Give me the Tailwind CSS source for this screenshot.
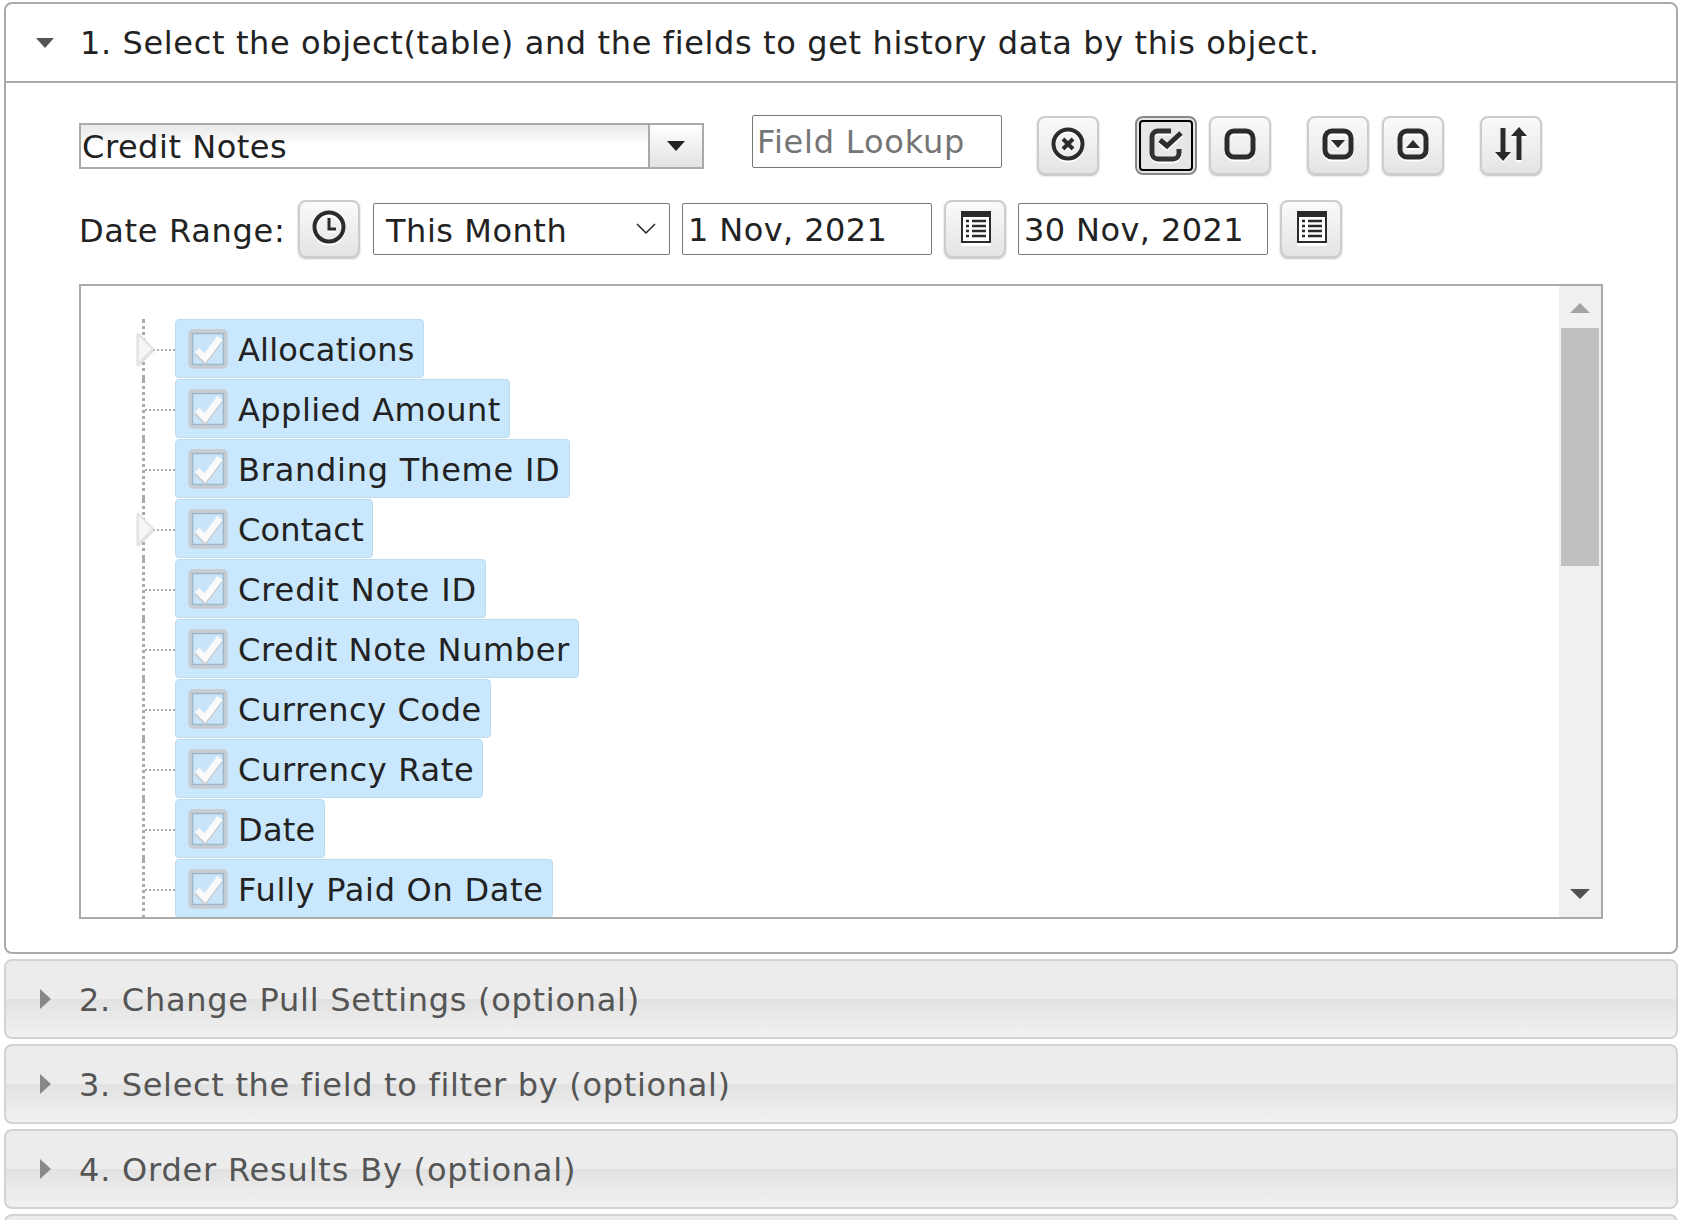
<!DOCTYPE html>
<html>
<head>
<meta charset="utf-8">
<script src="https://cdn.jsdelivr.net/npm/@tailwindcss/browser@4"></script>
</head>
<body class="bg-white font-['DejaVu_Sans',sans-serif] text-[#222] text-[32px] overflow-hidden h-[1220px]">
<div class="pl-[4px] pr-[8px] pt-[2px] flex flex-col gap-[5px] h-[1220px] overflow-hidden">

  <!-- Panel 1 -->
  <section class="h-[952px] shrink-0 border-2 border-[#aaa] rounded-lg bg-white flex flex-col">
    <header class="h-[79px] shrink-0 border-b-2 border-[#aaa] flex items-center pl-[29px]">
      <svg class="w-[20px] h-[12px] mr-[25px]" viewBox="0 0 20 12"><path d="M1 1h18l-9 10z" fill="#555"/></svg>
      <span class="leading-none pt-[1px] tracking-[0.63px]">1. Select the object(table) and the fields to get history data by this object.</span>
    </header>
    <div class="pl-[73px] pr-[73px]">
      <!-- row 1 -->
      <div class="flex h-[93px] pt-[32px]">
        <div class="w-[625px] h-[46px] mt-[8px] border-2 border-[#aaa] bg-gradient-to-b from-[#e8e8e8] via-white to-white flex">
          <div class="flex-1 leading-[44px] pl-[1px] tracking-[0.54px]">Credit Notes</div>
          <div class="w-[54px] border-l-2 border-[#aaa] bg-gradient-to-b from-white to-[#e2e2e2] flex items-center justify-center">
            <svg class="w-[18px] h-[10px]" viewBox="0 0 18 10"><path d="M0 0h18l-9 10z" fill="#222"/></svg>
          </div>
        </div>
        <div class="ml-[48px] w-[250px] h-[53px] border border-[#777] rounded-[2px] pl-[4px] leading-[53px] text-[#757575] tracking-[0.8px]">Field Lookup</div>
        <button class="ml-[35px] w-[62px] h-[59px] mt-[1px] border-2 border-[#ccc] rounded-lg bg-gradient-to-b from-[#fafafa] to-[#e4e4e4] shadow-[0_1px_2px_#bbb] flex items-center justify-center">
          <svg class="w-[34px] h-[34px] mb-[4px] drop-shadow-[0_2px_0_#fff]" viewBox="0 0 34 34"><circle cx="17" cy="17" r="14.5" fill="none" stroke="#2b2b2b" stroke-width="4"/><path d="M12 12l10 10M22 12l-10 10" stroke="#2b2b2b" stroke-width="4"/></svg>
        </button>
        <button class="ml-[36px] w-[62px] h-[59px] mt-[1px] border-2 border-[#888] rounded-lg bg-[#e6e6e6] p-[2px]">
          <span class="w-full h-full border-2 border-black rounded-[4px] flex items-center justify-center">
            <svg class="w-[34px] h-[34px] mb-[2px] drop-shadow-[0_2px_0_#fff]" viewBox="0 0 34 34"><path d="M30 21v4a6 6 0 0 1-6 6H9a6 6 0 0 1-6-6V9a6 6 0 0 1 6-6h13" fill="none" stroke="#333" stroke-width="5"/><path d="M11 12l7 6L32 5" fill="none" stroke="#2b2b2b" stroke-width="5"/></svg>
          </span>
        </button>
        <button class="ml-[12px] w-[62px] h-[59px] mt-[1px] border-2 border-[#ccc] rounded-lg bg-gradient-to-b from-[#fafafa] to-[#e4e4e4] shadow-[0_1px_2px_#bbb] flex items-center justify-center">
          <svg class="w-[32px] h-[32px] mb-[4px] drop-shadow-[0_2px_0_#fff]" viewBox="0 0 32 32"><rect x="3" y="3" width="26" height="26" rx="7" fill="none" stroke="#2b2b2b" stroke-width="5"/></svg>
        </button>
        <button class="ml-[36px] w-[62px] h-[59px] mt-[1px] border-2 border-[#ccc] rounded-lg bg-gradient-to-b from-[#fafafa] to-[#e4e4e4] shadow-[0_1px_2px_#bbb] flex items-center justify-center">
          <svg class="w-[32px] h-[32px] mb-[4px] drop-shadow-[0_2px_0_#fff]" viewBox="0 0 32 32"><rect x="3" y="3" width="26" height="26" rx="7" fill="none" stroke="#2b2b2b" stroke-width="5"/><path d="M9 12h14l-7 8z" fill="#2b2b2b"/></svg>
        </button>
        <button class="ml-[13px] w-[62px] h-[59px] mt-[1px] border-2 border-[#ccc] rounded-lg bg-gradient-to-b from-[#fafafa] to-[#e4e4e4] shadow-[0_1px_2px_#bbb] flex items-center justify-center">
          <svg class="w-[32px] h-[32px] mb-[4px] drop-shadow-[0_2px_0_#fff]" viewBox="0 0 32 32"><rect x="3" y="3" width="26" height="26" rx="7" fill="none" stroke="#2b2b2b" stroke-width="5"/><path d="M9 20h14l-7-8z" fill="#2b2b2b"/></svg>
        </button>
        <button class="ml-[36px] w-[62px] h-[59px] mt-[1px] border-2 border-[#ccc] rounded-lg bg-gradient-to-b from-[#fafafa] to-[#e4e4e4] shadow-[0_1px_2px_#bbb] flex items-center justify-center">
          <svg class="w-[32px] h-[34px] mb-[4px] drop-shadow-[0_2px_0_#fff]" viewBox="0 0 32 34"><path d="M8 1v25M24 8v25" stroke="#2b2b2b" stroke-width="5"/><path d="M0 25h16l-8 9zM16 9h16l-8-9z" fill="#2b2b2b"/></svg>
        </button>
      </div>
      <!-- row 2 -->
      <div class="flex h-[108px] pt-[24px] items-start">
        <span class="w-[219px] h-[58px] leading-[62px] shrink-0 tracking-[0.68px]">Date Range:</span>
        <button class="w-[62px] h-[58px] border-2 border-[#ccc] rounded-lg bg-gradient-to-b from-[#fafafa] to-[#e4e4e4] shadow-[0_1px_2px_#bbb] flex items-center justify-center">
          <svg class="w-[34px] h-[34px] mb-[4px] drop-shadow-[0_2px_0_#fff]" viewBox="0 0 34 34"><circle cx="17" cy="17" r="14.5" fill="none" stroke="#2b2b2b" stroke-width="4"/><path d="M17 8v11h7" fill="none" stroke="#2b2b2b" stroke-width="3"/></svg>
        </button>
        <div class="ml-[13px] mt-[3px] w-[297px] h-[52px] border border-[#777] rounded-[2px] flex items-center justify-between pl-[12px] pr-[13px]">
          <span class="tracking-[0.54px] pt-[3px]">This Month</span>
          <svg class="w-[20px] h-[12px]" viewBox="0 0 20 12"><path d="M1 1l9 9 9-9" fill="none" stroke="#222" stroke-width="1.5"/></svg>
        </div>
        <div class="ml-[12px] mt-[3px] w-[250px] h-[52px] border border-[#777] rounded-[2px] pl-[5px] leading-[53px] tracking-[0.4px]">1 Nov, 2021</div>
        <button class="ml-[12px] w-[62px] h-[58px] border-2 border-[#ccc] rounded-lg bg-gradient-to-b from-[#fafafa] to-[#e4e4e4] shadow-[0_1px_2px_#bbb] flex items-center justify-center">
          <svg class="w-[30px] h-[32px] mb-[4px] ml-[2px] drop-shadow-[0_3px_0_#fff]" viewBox="0 0 30 32"><rect x="0" y="0" width="30" height="32" fill="#2b2b2b"/><rect x="2" y="6" width="26" height="24" fill="#fff"/><path d="M5 10h3M11 10h14M5 15h3M11 15h14M5 20h3M11 20h14M5 25h3M11 25h14" stroke="#2b2b2b" stroke-width="2.5"/></svg>
        </button>
        <div class="ml-[12px] mt-[3px] w-[250px] h-[52px] border border-[#777] rounded-[2px] pl-[5px] leading-[53px] tracking-[0.4px]">30 Nov, 2021</div>
        <button class="ml-[12px] w-[62px] h-[58px] border-2 border-[#ccc] rounded-lg bg-gradient-to-b from-[#fafafa] to-[#e4e4e4] shadow-[0_1px_2px_#bbb] flex items-center justify-center">
          <svg class="w-[30px] h-[32px] mb-[4px] ml-[2px] drop-shadow-[0_3px_0_#fff]" viewBox="0 0 30 32"><rect x="0" y="0" width="30" height="32" fill="#2b2b2b"/><rect x="2" y="6" width="26" height="24" fill="#fff"/><path d="M5 10h3M11 10h14M5 15h3M11 15h14M5 20h3M11 20h14M5 25h3M11 25h14" stroke="#2b2b2b" stroke-width="2.5"/></svg>
        </button>
      </div>
      <!-- tree -->
      <div class="w-[1524px] h-[635px] border-2 border-[#aaa] flex overflow-hidden">
        <div class="flex-1 overflow-hidden pt-[33px] pl-[61px] flex flex-col">

          <div class="h-[60px] shrink-0 flex"><div class="w-[33px] shrink-0 relative border-l-[3px] border-dotted border-[#aaa]"><div class="absolute left-0 right-0 top-[30px] border-t-2 border-dotted border-[#aaa]"></div><svg class="absolute left-[-9px] top-[14px] w-[20px] h-[32px] drop-shadow-[0_1px_1px_#ccc]" viewBox="0 0 20 32"><path d="M2 1l15 15L2 31z" fill="#f6f6f6" stroke="#e4e4e4" stroke-width="2"/></svg></div><div class="h-[59px] flex items-center bg-[#c9e7fd] border border-[#bcdcf2] rounded-[4px] pl-[12px] pr-[8px] tracking-[0.2px]"><svg class="w-[40px] h-[40px] mr-[10px]" viewBox="0 0 40 40"><rect x="2" y="2" width="36" height="36" rx="3" fill="#d8e6f2" stroke="#c6ccd2" stroke-width="3.5"/><rect x="4.5" y="4.5" width="31" height="31" fill="#c9e4f8" stroke="#9fb4c4" stroke-width="1.5"/><path d="M9 21l8 8 15-20" fill="none" stroke="#c5cbd0" stroke-width="7" transform="translate(0 2)"/><path d="M9 21l8 8 15-20" fill="none" stroke="#fafafa" stroke-width="6.5"/></svg><span class="pt-[3px]">Allocations</span></div></div>

          <div class="h-[60px] shrink-0 flex"><div class="w-[33px] shrink-0 relative border-l-[3px] border-dotted border-[#aaa]"><div class="absolute left-0 right-0 top-[30px] border-t-2 border-dotted border-[#aaa]"></div></div><div class="h-[59px] flex items-center bg-[#c9e7fd] border border-[#bcdcf2] rounded-[4px] pl-[12px] pr-[8px] tracking-[0.46px]"><svg class="w-[40px] h-[40px] mr-[10px]" viewBox="0 0 40 40"><rect x="2" y="2" width="36" height="36" rx="3" fill="#d8e6f2" stroke="#c6ccd2" stroke-width="3.5"/><rect x="4.5" y="4.5" width="31" height="31" fill="#c9e4f8" stroke="#9fb4c4" stroke-width="1.5"/><path d="M9 21l8 8 15-20" fill="none" stroke="#c5cbd0" stroke-width="7" transform="translate(0 2)"/><path d="M9 21l8 8 15-20" fill="none" stroke="#fafafa" stroke-width="6.5"/></svg><span class="pt-[3px]">Applied Amount</span></div></div>

          <div class="h-[60px] shrink-0 flex"><div class="w-[33px] shrink-0 relative border-l-[3px] border-dotted border-[#aaa]"><div class="absolute left-0 right-0 top-[30px] border-t-2 border-dotted border-[#aaa]"></div></div><div class="h-[59px] flex items-center bg-[#c9e7fd] border border-[#bcdcf2] rounded-[4px] pl-[12px] pr-[8px] tracking-[0.76px]"><svg class="w-[40px] h-[40px] mr-[10px]" viewBox="0 0 40 40"><rect x="2" y="2" width="36" height="36" rx="3" fill="#d8e6f2" stroke="#c6ccd2" stroke-width="3.5"/><rect x="4.5" y="4.5" width="31" height="31" fill="#c9e4f8" stroke="#9fb4c4" stroke-width="1.5"/><path d="M9 21l8 8 15-20" fill="none" stroke="#c5cbd0" stroke-width="7" transform="translate(0 2)"/><path d="M9 21l8 8 15-20" fill="none" stroke="#fafafa" stroke-width="6.5"/></svg><span class="pt-[3px]">Branding Theme ID</span></div></div>

          <div class="h-[60px] shrink-0 flex"><div class="w-[33px] shrink-0 relative border-l-[3px] border-dotted border-[#aaa]"><div class="absolute left-0 right-0 top-[30px] border-t-2 border-dotted border-[#aaa]"></div><svg class="absolute left-[-9px] top-[14px] w-[20px] h-[32px] drop-shadow-[0_1px_1px_#ccc]" viewBox="0 0 20 32"><path d="M2 1l15 15L2 31z" fill="#f6f6f6" stroke="#e4e4e4" stroke-width="2"/></svg></div><div class="h-[59px] flex items-center bg-[#c9e7fd] border border-[#bcdcf2] rounded-[4px] pl-[12px] pr-[8px] tracking-[0.2px]"><svg class="w-[40px] h-[40px] mr-[10px]" viewBox="0 0 40 40"><rect x="2" y="2" width="36" height="36" rx="3" fill="#d8e6f2" stroke="#c6ccd2" stroke-width="3.5"/><rect x="4.5" y="4.5" width="31" height="31" fill="#c9e4f8" stroke="#9fb4c4" stroke-width="1.5"/><path d="M9 21l8 8 15-20" fill="none" stroke="#c5cbd0" stroke-width="7" transform="translate(0 2)"/><path d="M9 21l8 8 15-20" fill="none" stroke="#fafafa" stroke-width="6.5"/></svg><span class="pt-[3px]">Contact</span></div></div>

          <div class="h-[60px] shrink-0 flex"><div class="w-[33px] shrink-0 relative border-l-[3px] border-dotted border-[#aaa]"><div class="absolute left-0 right-0 top-[30px] border-t-2 border-dotted border-[#aaa]"></div></div><div class="h-[59px] flex items-center bg-[#c9e7fd] border border-[#bcdcf2] rounded-[4px] pl-[12px] pr-[8px] tracking-[0.9px]"><svg class="w-[40px] h-[40px] mr-[10px]" viewBox="0 0 40 40"><rect x="2" y="2" width="36" height="36" rx="3" fill="#d8e6f2" stroke="#c6ccd2" stroke-width="3.5"/><rect x="4.5" y="4.5" width="31" height="31" fill="#c9e4f8" stroke="#9fb4c4" stroke-width="1.5"/><path d="M9 21l8 8 15-20" fill="none" stroke="#c5cbd0" stroke-width="7" transform="translate(0 2)"/><path d="M9 21l8 8 15-20" fill="none" stroke="#fafafa" stroke-width="6.5"/></svg><span class="pt-[3px]">Credit Note ID</span></div></div>

          <div class="h-[60px] shrink-0 flex"><div class="w-[33px] shrink-0 relative border-l-[3px] border-dotted border-[#aaa]"><div class="absolute left-0 right-0 top-[30px] border-t-2 border-dotted border-[#aaa]"></div></div><div class="h-[59px] flex items-center bg-[#c9e7fd] border border-[#bcdcf2] rounded-[4px] pl-[12px] pr-[8px] tracking-[0.6px]"><svg class="w-[40px] h-[40px] mr-[10px]" viewBox="0 0 40 40"><rect x="2" y="2" width="36" height="36" rx="3" fill="#d8e6f2" stroke="#c6ccd2" stroke-width="3.5"/><rect x="4.5" y="4.5" width="31" height="31" fill="#c9e4f8" stroke="#9fb4c4" stroke-width="1.5"/><path d="M9 21l8 8 15-20" fill="none" stroke="#c5cbd0" stroke-width="7" transform="translate(0 2)"/><path d="M9 21l8 8 15-20" fill="none" stroke="#fafafa" stroke-width="6.5"/></svg><span class="pt-[3px]">Credit Note Number</span></div></div>

          <div class="h-[60px] shrink-0 flex"><div class="w-[33px] shrink-0 relative border-l-[3px] border-dotted border-[#aaa]"><div class="absolute left-0 right-0 top-[30px] border-t-2 border-dotted border-[#aaa]"></div></div><div class="h-[59px] flex items-center bg-[#c9e7fd] border border-[#bcdcf2] rounded-[4px] pl-[12px] pr-[8px] tracking-[0.58px]"><svg class="w-[40px] h-[40px] mr-[10px]" viewBox="0 0 40 40"><rect x="2" y="2" width="36" height="36" rx="3" fill="#d8e6f2" stroke="#c6ccd2" stroke-width="3.5"/><rect x="4.5" y="4.5" width="31" height="31" fill="#c9e4f8" stroke="#9fb4c4" stroke-width="1.5"/><path d="M9 21l8 8 15-20" fill="none" stroke="#c5cbd0" stroke-width="7" transform="translate(0 2)"/><path d="M9 21l8 8 15-20" fill="none" stroke="#fafafa" stroke-width="6.5"/></svg><span class="pt-[3px]">Currency Code</span></div></div>

          <div class="h-[60px] shrink-0 flex"><div class="w-[33px] shrink-0 relative border-l-[3px] border-dotted border-[#aaa]"><div class="absolute left-0 right-0 top-[30px] border-t-2 border-dotted border-[#aaa]"></div></div><div class="h-[59px] flex items-center bg-[#c9e7fd] border border-[#bcdcf2] rounded-[4px] pl-[12px] pr-[8px] tracking-[0.66px]"><svg class="w-[40px] h-[40px] mr-[10px]" viewBox="0 0 40 40"><rect x="2" y="2" width="36" height="36" rx="3" fill="#d8e6f2" stroke="#c6ccd2" stroke-width="3.5"/><rect x="4.5" y="4.5" width="31" height="31" fill="#c9e4f8" stroke="#9fb4c4" stroke-width="1.5"/><path d="M9 21l8 8 15-20" fill="none" stroke="#c5cbd0" stroke-width="7" transform="translate(0 2)"/><path d="M9 21l8 8 15-20" fill="none" stroke="#fafafa" stroke-width="6.5"/></svg><span class="pt-[3px]">Currency Rate</span></div></div>

          <div class="h-[60px] shrink-0 flex"><div class="w-[33px] shrink-0 relative border-l-[3px] border-dotted border-[#aaa]"><div class="absolute left-0 right-0 top-[30px] border-t-2 border-dotted border-[#aaa]"></div></div><div class="h-[59px] flex items-center bg-[#c9e7fd] border border-[#bcdcf2] rounded-[4px] pl-[12px] pr-[8px] tracking-[0.27px]"><svg class="w-[40px] h-[40px] mr-[10px]" viewBox="0 0 40 40"><rect x="2" y="2" width="36" height="36" rx="3" fill="#d8e6f2" stroke="#c6ccd2" stroke-width="3.5"/><rect x="4.5" y="4.5" width="31" height="31" fill="#c9e4f8" stroke="#9fb4c4" stroke-width="1.5"/><path d="M9 21l8 8 15-20" fill="none" stroke="#c5cbd0" stroke-width="7" transform="translate(0 2)"/><path d="M9 21l8 8 15-20" fill="none" stroke="#fafafa" stroke-width="6.5"/></svg><span class="pt-[3px]">Date</span></div></div>

          <div class="h-[60px] shrink-0 flex"><div class="w-[33px] shrink-0 relative border-l-[3px] border-dotted border-[#aaa]"><div class="absolute left-0 right-0 top-[30px] border-t-2 border-dotted border-[#aaa]"></div></div><div class="h-[59px] flex items-center bg-[#c9e7fd] border border-[#bcdcf2] rounded-[4px] pl-[12px] pr-[8px] tracking-[0.72px]"><svg class="w-[40px] h-[40px] mr-[10px]" viewBox="0 0 40 40"><rect x="2" y="2" width="36" height="36" rx="3" fill="#d8e6f2" stroke="#c6ccd2" stroke-width="3.5"/><rect x="4.5" y="4.5" width="31" height="31" fill="#c9e4f8" stroke="#9fb4c4" stroke-width="1.5"/><path d="M9 21l8 8 15-20" fill="none" stroke="#c5cbd0" stroke-width="7" transform="translate(0 2)"/><path d="M9 21l8 8 15-20" fill="none" stroke="#fafafa" stroke-width="6.5"/></svg><span class="pt-[3px]">Fully Paid On Date</span></div></div>

        </div>
        <!-- scrollbar -->
        <div class="w-[42px] shrink-0 bg-[#f0f0f0] flex flex-col items-center">
          <div class="h-[42px] shrink-0 pt-[2px] flex items-center justify-center"><svg class="w-[20px] h-[10px]" viewBox="0 0 20 10"><path d="M0 10h20L10 0z" fill="#a3a3a3"/></svg></div>
          <div class="w-[38px] h-[238px] shrink-0 bg-[#c0c0c0]"></div>
          <div class="flex-1"></div>
          <div class="h-[46px] shrink-0 flex items-center justify-center"><svg class="w-[20px] h-[10px]" viewBox="0 0 20 10"><path d="M0 0h20L10 10z" fill="#505050"/></svg></div>
        </div>
      </div>
    </div>
  </section>

  <!-- Collapsed panels -->
  <section class="h-[80px] shrink-0 border-2 border-[#d3d3d3] rounded-lg bg-[linear-gradient(#ececec_50%,#e2e2e2_50%,#f1f1f1)] flex items-center pl-[34px] text-[#555]">
    <svg class="w-[11px] h-[20px] mr-[28px]" viewBox="0 0 11 20"><path d="M0 0l11 10L0 20z" fill="#888"/></svg>
    <span class="pt-[2px] tracking-[0.72px]">2. Change Pull Settings (optional)</span>
  </section>
  <section class="h-[80px] shrink-0 border-2 border-[#d3d3d3] rounded-lg bg-[linear-gradient(#ececec_50%,#e2e2e2_50%,#f1f1f1)] flex items-center pl-[34px] text-[#555]">
    <svg class="w-[11px] h-[20px] mr-[28px]" viewBox="0 0 11 20"><path d="M0 0l11 10L0 20z" fill="#888"/></svg>
    <span class="pt-[2px] tracking-[0.68px]">3. Select the field to filter by (optional)</span>
  </section>
  <section class="h-[80px] shrink-0 border-2 border-[#d3d3d3] rounded-lg bg-[linear-gradient(#ececec_50%,#e2e2e2_50%,#f1f1f1)] flex items-center pl-[34px] text-[#555]">
    <svg class="w-[11px] h-[20px] mr-[28px]" viewBox="0 0 11 20"><path d="M0 0l11 10L0 20z" fill="#888"/></svg>
    <span class="pt-[2px] tracking-[0.8px]">4. Order Results By (optional)</span>
  </section>
  <section class="h-[80px] shrink-0 border-2 border-[#d3d3d3] rounded-lg bg-[linear-gradient(#ececec_50%,#e2e2e2_50%,#f1f1f1)]"></section>
</div>
</body>
</html>
